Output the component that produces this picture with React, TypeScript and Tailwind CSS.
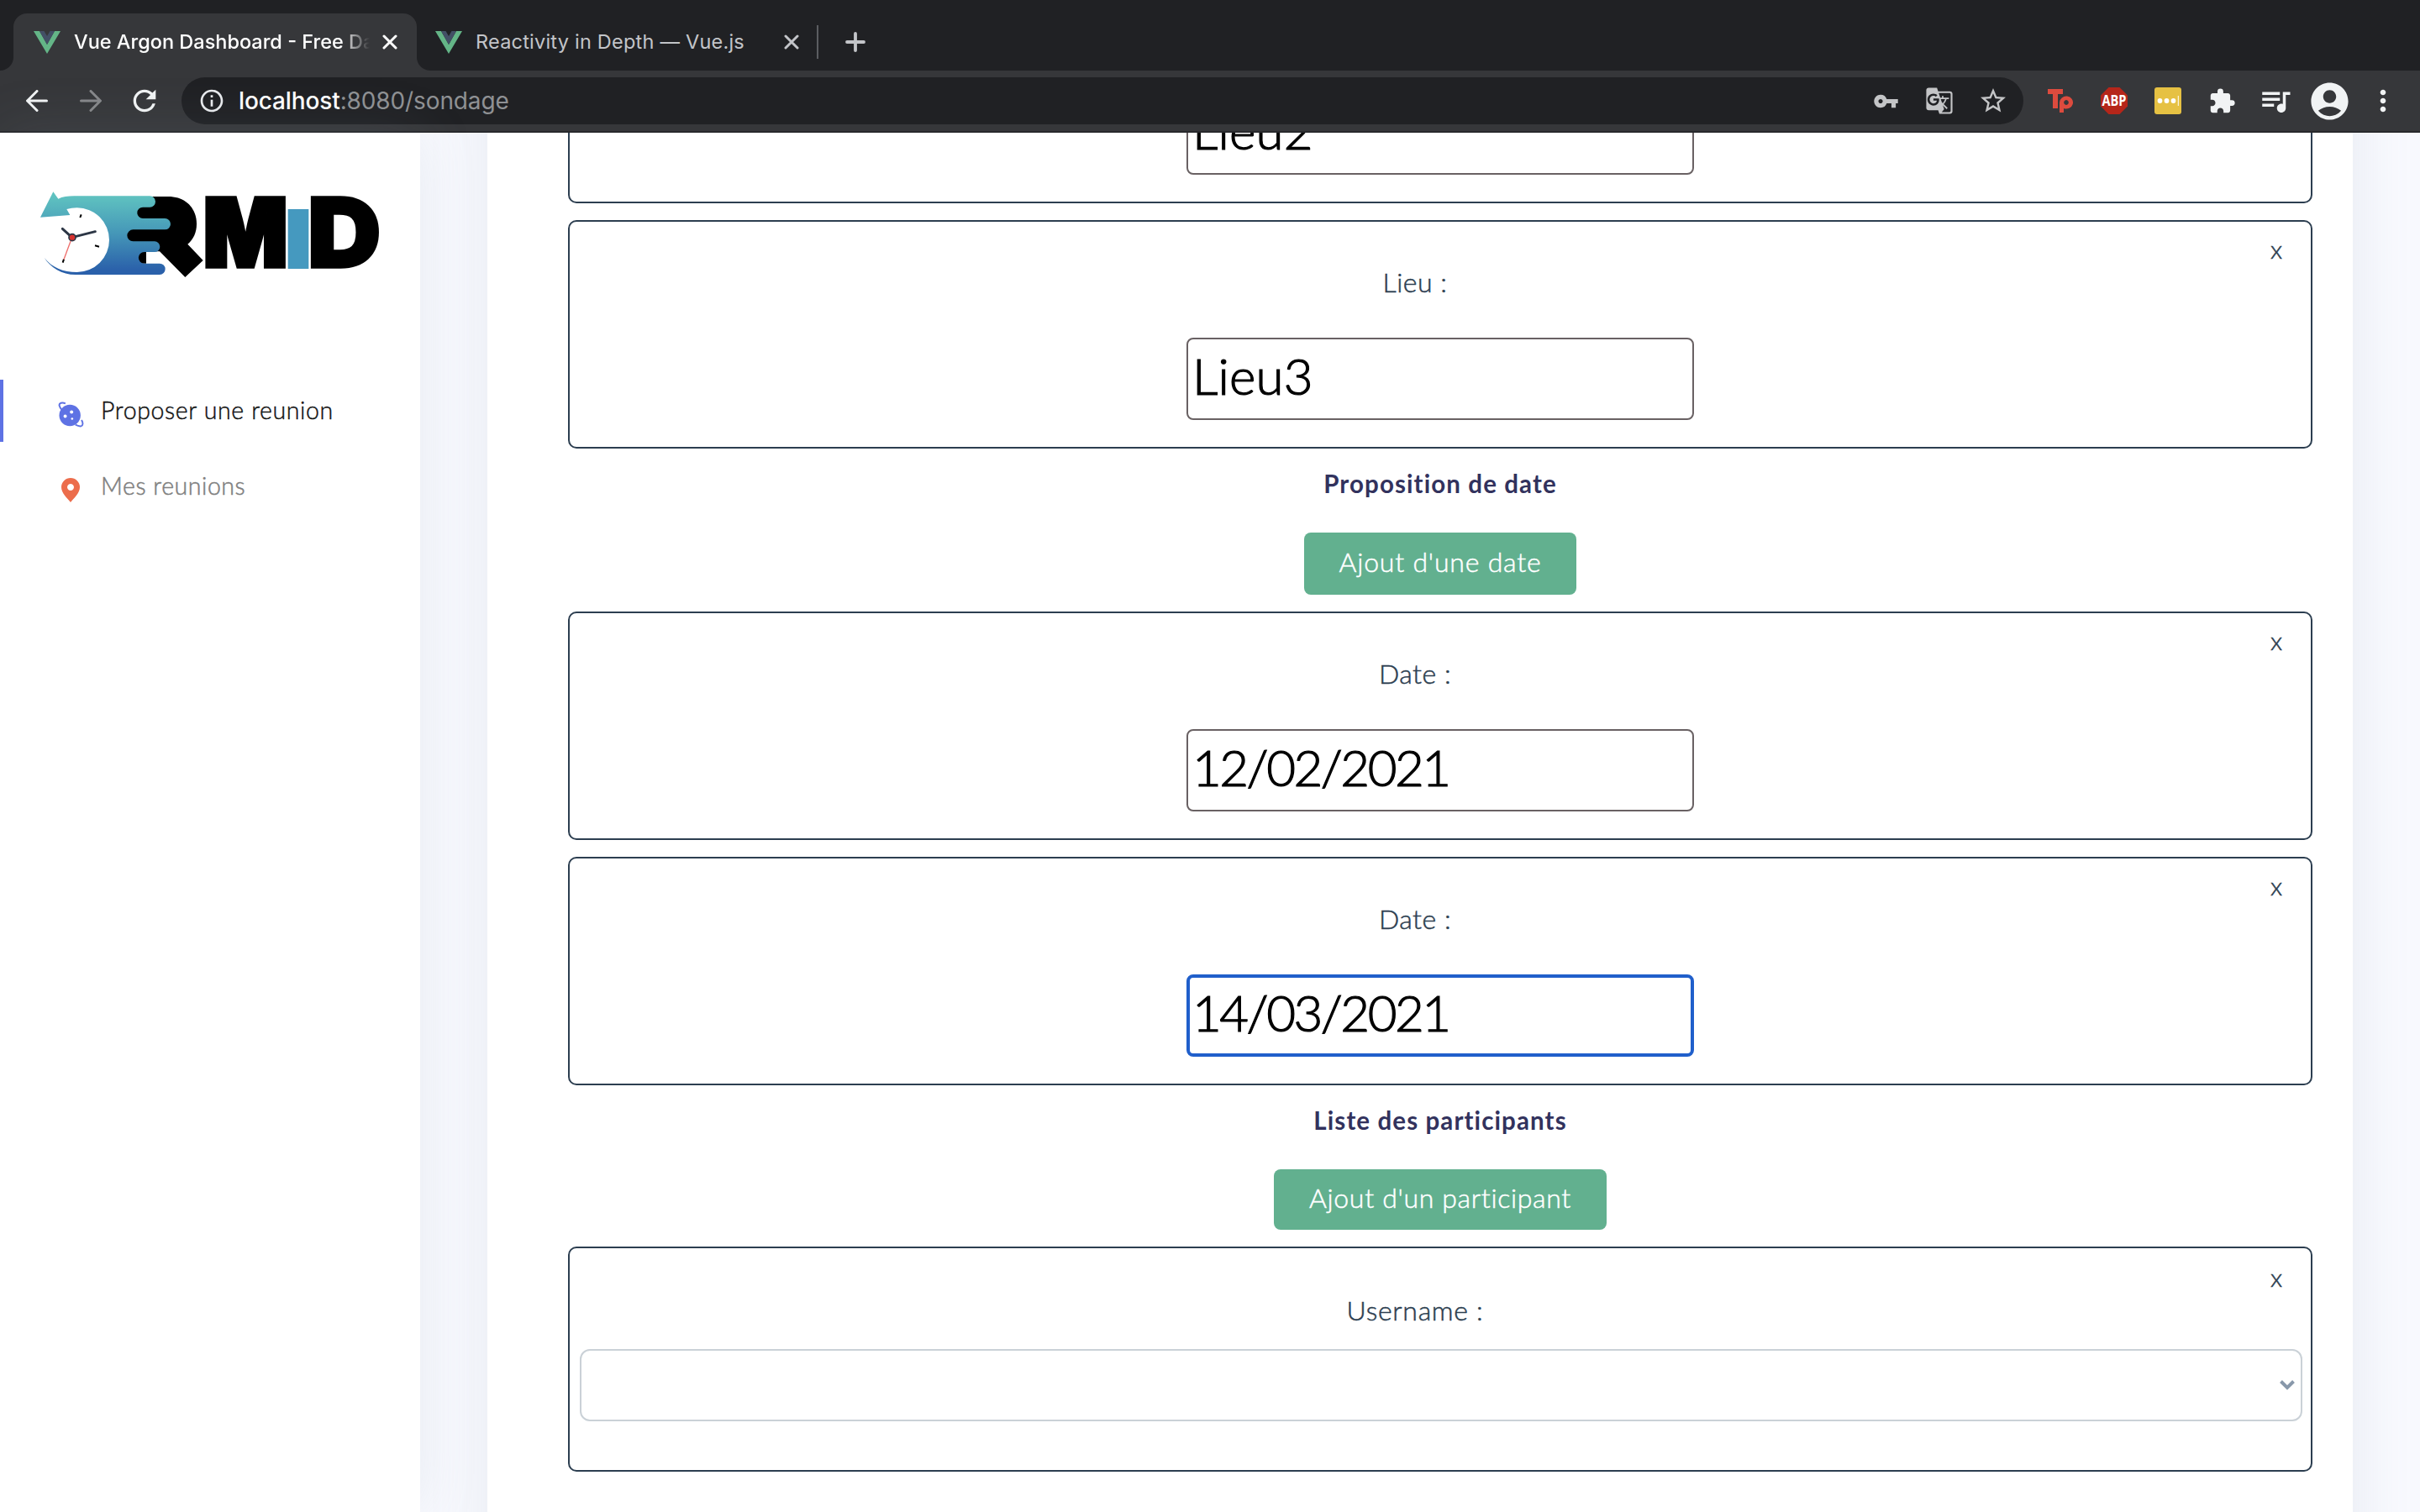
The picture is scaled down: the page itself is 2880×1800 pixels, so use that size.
import React from "react";
import {
  MdVpnKey,
  MdGTranslate,
  MdStarBorder,
  MdExtension,
  MdQueueMusic,
  MdAccountCircle,
  MdMoreVert,
  MdRefresh,
  MdInfoOutline,
} from "react-icons/md";

function VueLogo() {
  return (
    <svg viewBox="0 0 32 27" className="h-[27px] w-8 shrink-0">
      <path d="M0 0h7l9 16L25 0h7L16 27z" fill="#64b587" />
      <path d="M7 0h5.500L16 6l3.500-6H25l-9 16z" fill="#435066" />
    </svg>
  );
}

function Cross({ className }: { className: string }) {
  return (
    <svg viewBox="0 0 18 18" className={className} fill="none" stroke="currentColor" strokeWidth="3" strokeLinecap="round">
      <path d="M2 2l14 14M16 2L2 16" />
    </svg>
  );
}

function Arrow({ className }: { className: string }) {
  return (
    <svg viewBox="0 0 26 26" className={className} fill="none" stroke="currentColor" strokeWidth="3" strokeLinecap="round">
      <path d="M24.500 13H2M13 1.500L1.500 13L13 24.500" />
    </svg>
  );
}

function Slot({ children }: { children: React.ReactNode }) {
  return <div className="flex h-full w-16 shrink-0 items-center justify-center">{children}</div>;
}

function TabStrip() {
  return (
    <div className="flex h-[84px] shrink-0 items-end bg-[#202124]">
      <div className="h-4 w-4 bg-[#36373a]">
        <div className="h-4 w-4 rounded-br-2xl bg-[#202124]" />
      </div>
      <div className="flex h-[68px] w-[480px] items-center rounded-t-2xl bg-[#36373a] pl-6">
        <VueLogo />
        <div className="ml-4 w-[352px] overflow-hidden text-[23.500px] leading-9 font-medium whitespace-nowrap text-white [mask-image:linear-gradient(to_right,black_90%,transparent)]">
          Vue Argon Dashboard - Free Dashboard
        </div>
        <Cross className="ml-[15px] h-[18px] w-[18px] text-white" />
      </div>
      <div className="h-4 w-4 bg-[#36373a]">
        <div className="h-4 w-4 rounded-bl-2xl bg-[#202124]" />
      </div>
      <div className="flex h-[68px] items-center pl-1.5">
        <VueLogo />
        <div className="ml-4 w-[367px]">
          <span className="text-[23.500px] leading-9 tracking-[0.220px] whitespace-nowrap text-[#c3c5c9]">
            Reactivity in Depth — Vue.js
          </span>
        </div>
        <Cross className="h-[18px] w-[18px] text-[#c3c5c9]" />
        <div className="ml-[21px] h-10 w-0.5 bg-[#5b5d61]" />
        <svg viewBox="0 0 24 24" className="ml-8 h-6 w-6 text-[#c3c5c9]" fill="none" stroke="currentColor" strokeWidth="3.800" strokeLinecap="round">
          <path d="M12 2v20M2 12h20" />
        </svg>
      </div>
    </div>
  );
}

function Toolbar() {
  return (
    <div className="flex h-[74px] shrink-0 items-center border-b-2 border-[#28292c] bg-[#36373a] px-3">
      <Slot>
        <Arrow className="h-[26px] w-[26px] text-[#f1f3f4]" />
      </Slot>
      <Slot>
        <Arrow className="h-[26px] w-[26px] rotate-180 text-[#86878a]" />
      </Slot>
      <Slot>
        <MdRefresh className="size-10 text-[#f1f3f4]" />
      </Slot>
      <div className="mx-3 flex h-14 flex-1 items-center rounded-full bg-[#202124] pr-1 pl-5">
        <MdInfoOutline className="size-8 text-[#e8eaed]" />
        <div className="ml-4 flex-1 text-[28px] leading-10 tracking-[-0.120px] text-[#8f9194]">
          <span className="font-medium text-white">localhost</span>:8080/sondage
        </div>
        <Slot>
          <MdVpnKey className="size-[31px] text-[#c4c5c7]" />
        </Slot>
        <Slot>
          <MdGTranslate className="size-[34px] text-[#c4c5c7]" />
        </Slot>
        <Slot>
          <MdStarBorder className="size-9 text-[#c4c5c7]" />
        </Slot>
      </div>
      <Slot>
        <svg viewBox="0 0 30 28" className="h-7 w-[30px]">
          <path d="M0 0h18v6h-6v17H6V6H0z" fill="#dd4b3e" />
          <path fillRule="evenodd" d="M14 28V16a8 7.500 0 1 1 5 7v5zM22 13a2.800 3 0 1 0 .01 0z" fill="#dd4b3e" />
        </svg>
      </Slot>
      <Slot>
        <svg viewBox="0 0 32 32" className="size-8">
          <path d="M9.500 0h13L32 9.500v13L22.500 32h-13L0 22.500v-13z" fill="#b5261a" />
          <text x="16" y="22" textAnchor="middle" textLength="29" lengthAdjust="spacingAndGlyphs" fontSize="17" fontWeight="700" fill="white" fontFamily="Open Sans, sans-serif">
            ABP
          </text>
        </svg>
      </Slot>
      <Slot>
        <svg viewBox="0 0 32 32" className="size-8">
          <rect width="32" height="32" rx="3" fill="#e6c143" />
          <circle cx="6.500" cy="16" r="2.900" fill="white" />
          <circle cx="14.500" cy="16" r="2.900" fill="white" />
          <circle cx="22.500" cy="16" r="2.900" fill="white" />
          <rect x="27.800" y="10" width="1" height="12" fill="white" />
        </svg>
      </Slot>
      <Slot>
        <MdExtension className="size-[33px] text-[#f1f3f4]" />
      </Slot>
      <Slot>
        <MdQueueMusic className="size-[42px] text-[#f1f3f4]" />
      </Slot>
      <Slot>
        <MdAccountCircle className="size-[53px] text-[#f1f3f4]" />
      </Slot>
      <Slot>
        <MdMoreVert className="size-10 text-[#f1f3f4]" />
      </Slot>
    </div>
  );
}

function Logo() {
  return (
    <svg viewBox="0 -30 1320 480" className="ml-[30px] h-[160px] w-[440px]">
      <defs>
        <linearGradient id="speed" x1="0" y1="0" x2="0" y2="1">
          <stop offset="0.050" stopColor="#5fc2c0" />
          <stop offset="0.500" stopColor="#4597b8" />
          <stop offset="0.950" stopColor="#2a60aa" />
        </linearGradient>
      </defs>
      <path d="M380 100H440V72H510C575 72 612 115 612 170C612 200 600 225 580 242L635 300L571 360L480 268H432V311H380V240H360V180H380Z" />
      <path
        fill="url(#speed)"
        d="M118 80Q140 70 175 70H445a20 20 0 0 1 0 40H420a20 20 0 0 0 0 40H499a20 20 0 0 1 0 40H385a21 21 0 0 0 0 42H462a19 19 0 0 1 0 38H425a20.500 20.500 0 0 0 0 41H480a20 20 0 0 1 0 40H180C130 351 90 325 68 290C95 325 135 342 185 342A115 115 0 0 0 300 227A115 115 0 0 0 185 112Q165 112 148 117L160 138L54 146L100 55Z"
      />
      <path d="M200 136l-4 11M249 247l15 4M138 296l-4 12" stroke="black" strokeWidth="6" />
      <path d="M167 218L133 187M167 218L250 197" stroke="#2c3645" strokeWidth="9" strokeLinecap="round" />
      <path d="M167 218L138 296" stroke="#ee6e6b" strokeWidth="4" />
      <circle cx="168" cy="218" r="12" fill="#d6322f" stroke="#2c3645" strokeWidth="5" />
      <text x="636" y="322" fontFamily="Inter, sans-serif" fontWeight="900" fontSize="333" stroke="black" strokeWidth="16" textLength="301" lengthAdjust="spacingAndGlyphs">
        M
      </text>
      <text x="1008" y="325" fontFamily="Inter, sans-serif" fontWeight="900" fontSize="341" stroke="black" strokeWidth="10" textLength="262" lengthAdjust="spacingAndGlyphs">
        D
      </text>
      <rect x="938" y="117" width="74" height="213" fill="#4599bf" />
    </svg>
  );
}

function PlanetIcon() {
  return (
    <svg viewBox="205 142 94 94" className="h-[31px] w-[31px]">
      <circle cx="248" cy="192" r="38.500" fill="#5e72e4" />
      <path d="M232 149c-12-5-24-2-22 8c1 6 5 12 12 18M290 209c6 10 6 20-2 22c-6 1-12-1-20-5" fill="none" stroke="#5e72e4" strokeWidth="6" />
      <circle cx="254" cy="180" r="6" fill="white" />
      <circle cx="231" cy="195" r="6" fill="white" />
      <circle cx="256" cy="204" r="4" fill="white" />
    </svg>
  );
}

function PinIcon() {
  return (
    <svg viewBox="0 0 22 29" className="ml-1 h-[29px] w-[22px]">
      <path fillRule="evenodd" d="M11 0a11 11 0 0 1 11 11c0 7-7 13-11 18C7 24 0 18 0 11A11 11 0 0 1 11 0zM11 7a4 4 0 1 0 .01 0z" fill="#ec6d4c" />
    </svg>
  );
}

function Sidebar() {
  return (
    <aside className="relative z-10 w-[500px] shrink-0 bg-white pt-[42px] shadow-[0_0_64px_0_rgba(136,152,170,0.15)]">
      <Logo />
      <nav className="mt-[92px] font-[Lato,sans-serif] text-[28.500px] leading-10 font-light [-webkit-text-stroke-width:0.5px] [font-variant-ligatures:none]">
        <div className="flex h-[74px] items-center border-l-4 border-[#5e72e4] pl-[65px]">
          <div className="mt-2 w-[51px]">
            <PlanetIcon />
          </div>
          <span className="pb-[3px] tracking-[0.620px] text-black/90">Proposer une reunion</span>
        </div>
        <div className="mt-4 flex h-[74px] items-center pl-[69px]">
          <div className="mt-2 w-[51px]">
            <PinIcon />
          </div>
          <span className="pb-[3px] tracking-[0.550px] text-[#808080]">Mes reunions</span>
        </div>
      </nav>
    </aside>
  );
}

function CloseRow() {
  return <div className="flex h-10 justify-end pr-[34px] text-[30px] leading-10">x</div>;
}

function FieldBox({ label, value, focused = false }: { label: string; value: string; focused?: boolean }) {
  return (
    <section className="flex h-[272px] shrink-0 flex-col items-stretch rounded-[10px] border-2 border-[#2c3e50] pt-3 text-[#2c3e50]">
      <CloseRow />
      <div className="pr-[60px] text-center text-[32px] leading-10 tracking-[0.500px]">{label} :</div>
      <div
        className={
          focused
            ? "mx-auto mt-[46px] flex h-[98px] w-[604px] items-center rounded-lg border-4 border-[#205fcb] pb-2 pl-[3px] text-[60px] leading-none text-black"
            : "mx-auto mt-[46px] flex h-[98px] w-[604px] items-center rounded-lg border-2 border-[#696163] pb-2 pl-[5px] text-[60px] leading-none text-black"
        }
      >
        <span
          className={
            label === "Lieu"
              ? "tracking-[0.200px] [-webkit-text-stroke-width:1.200px]"
              : "tracking-[-2.500px] [-webkit-text-stroke-width:1.200px]"
          }
        >
          {value}
        </span>
      </div>
    </section>
  );
}

function Heading({ children }: { children: string }) {
  return (
    <h3 className="mt-[22px] text-center text-[29.500px] leading-10 font-bold tracking-[1.100px] text-[#32325d] [-webkit-text-stroke-width:0px]">
      {children}
    </h3>
  );
}

function Main() {
  return (
    <main className="flex-1 overflow-hidden bg-[#f8f9fe] px-20">
      <div className="-mt-[388px] flex h-[2300px] w-[2220px] flex-col bg-white pt-[200px] pr-12 pl-24 font-[Lato,sans-serif] font-light shadow-[0_0_64px_0_rgba(136,152,170,0.15)] [-webkit-text-stroke-width:0.5px] [font-variant-ligatures:none]">
        <div className="flex flex-col gap-5">
          <FieldBox label="Lieu" value="Lieu2" />
          <FieldBox label="Lieu" value="Lieu3" />
        </div>
        <Heading>Proposition de date</Heading>
        <button className="mx-auto mt-[38px] mb-5 h-[74px] w-[324px] shrink-0 rounded-lg bg-[#62b08f] pb-[5px] text-[32px] tracking-[0.800px] text-white">
          Ajout d'une date
        </button>
        <div className="flex flex-col gap-5">
          <FieldBox label="Date" value="12/02/2021" />
          <FieldBox label="Date" value="14/03/2021" focused />
        </div>
        <Heading>Liste des participants</Heading>
        <button className="mx-auto mt-[38px] mb-5 h-[72px] w-[396px] shrink-0 rounded-lg bg-[#62b08f] pb-1 text-[32px] tracking-[0.680px] text-white">
          Ajout d'un participant
        </button>
        <section className="h-[268px] shrink-0 rounded-[10px] border-2 border-[#2c3e50] pt-3.5 text-[#2c3e50]">
          <CloseRow />
          <div className="pr-[60px] text-center text-[32px] leading-10 tracking-[0.700px]">Username :</div>
          <div className="mt-[26px] mr-2.5 ml-3 flex h-[86px] items-center justify-end rounded-xl border-2 border-[#cad1d7] pr-[7px]">
            <svg viewBox="0 0 18 12" className="h-3 w-[18px]" fill="none" stroke="#8898aa" strokeWidth="4">
              <path d="M1.500 1.500L9 9l7.500-7.500" />
            </svg>
          </div>
        </section>
      </div>
    </main>
  );
}

export default function App() {
  return (
    <div className="flex h-[1800px] w-[2880px] flex-col overflow-hidden bg-white font-[Inter,sans-serif]">
      <TabStrip />
      <Toolbar />
      <div className="flex min-h-0 flex-1">
        <Sidebar />
        <Main />
      </div>
    </div>
  );
}
